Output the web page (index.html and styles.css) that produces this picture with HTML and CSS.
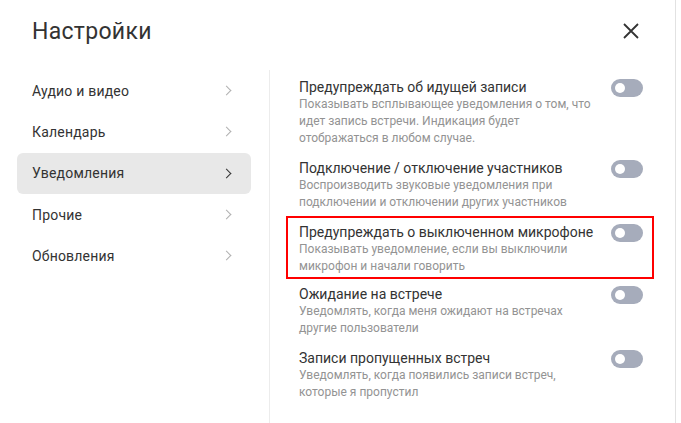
FILE: index.html
```html
<!DOCTYPE html>
<html lang="ru">
<head>
    <meta charset="UTF-8">
    <meta name="viewport" content="width=device-width, initial-scale=1.0">
    <title>Настройки</title>
    <link rel="stylesheet" href="styles.css">
</head>
<body>
    <div class="dialog">
        <div class="header">
            <h1>Настройки</h1>
            <button class="close" aria-label="Закрыть">
                <svg width="16" height="16" viewBox="0 0 16 16">
                    <path d="M1 1 L15 15 M15 1 L1 15" stroke="#333" stroke-width="1.8" fill="none"/>
                </svg>
            </button>
        </div>

        <div class="body">
            <ul class="nav">
                <li>Аудио и видео <span class="chevron"></span></li>
                <li>Календарь <span class="chevron"></span></li>
                <li class="active">Уведомления <span class="chevron"></span></li>
                <li>Прочие <span class="chevron"></span></li>
                <li>Обновления <span class="chevron"></span></li>
            </ul>

            <div class="options">
                <div class="option">
                    <div class="option-text">
                        <div class="option-title">Предупреждать об идущей записи</div>
                        <div class="option-desc">Показывать всплывающее уведомления о том, что идет запись встречи. Индикация будет отображаться в любом случае.</div>
                    </div>
                    <span class="toggle"></span>
                </div>
                <div class="option">
                    <div class="option-text">
                        <div class="option-title">Подключение / отключение участников</div>
                        <div class="option-desc">Воспроизводить звуковые уведомления при подключении и отключении других участников</div>
                    </div>
                    <span class="toggle"></span>
                </div>
                <div class="option marked">
                    <div class="option-text">
                        <div class="option-title">Предупреждать о выключенном микрофоне</div>
                        <div class="option-desc">Показывать уведомление, если вы выключили микрофон и начали говорить</div>
                    </div>
                    <span class="toggle"></span>
                </div>
                <div class="option">
                    <div class="option-text">
                        <div class="option-title">Ожидание на встрече</div>
                        <div class="option-desc">Уведомлять, когда меня ожидают на встречах другие пользователи</div>
                    </div>
                    <span class="toggle"></span>
                </div>
                <div class="option">
                    <div class="option-text">
                        <div class="option-title">Записи пропущенных встреч</div>
                        <div class="option-desc">Уведомлять, когда появились записи встреч, которые я пропустил</div>
                    </div>
                    <span class="toggle"></span>
                </div>
            </div>
        </div>
    </div>
</body>
</html>
```

FILE: styles.css
```css
* {
    margin: 0;
    padding: 0;
    box-sizing: border-box;
}

body {
    font-family: Roboto, 'Noto Sans', sans-serif;
    background: #fff;
    color: #333;
    overflow: hidden;
}

.dialog {
    width: 676px;
    height: 423px;
    border-right: 1px solid #e2e2e2;
    background: #fff;
}

.header {
    display: flex;
    align-items: center;
    justify-content: space-between;
    height: 62px;
    padding: 0 36px 0 32px;
}

.header h1 {
    font-size: 23px;
    font-weight: 400;
    color: #333;
    letter-spacing: 0.3px;
}

.close {
    background: none;
    border: none;
    width: 16px;
    height: 16px;
    display: flex;
    cursor: pointer;
}

.body {
    display: flex;
    padding-top: 8px;
}

.nav {
    list-style: none;
    width: 270px;
    padding: 0 18px 0 17px;
    border-right: 1px solid #ececec;
    height: 353px;
}

.nav li {
    display: flex;
    align-items: center;
    justify-content: space-between;
    height: 41.3px;
    padding: 0 21px 0 15px;
    font-size: 14px;
    letter-spacing: 0.2px;
    color: #333;
    border-radius: 6px;
}

.nav li.active {
    background: #e8e8e8;
}

.chevron {
    width: 7px;
    height: 7px;
    border-top: 1.2px solid #b0b0b0;
    border-right: 1.2px solid #b0b0b0;
    transform: rotate(45deg);
}

.nav li.active .chevron {
    border-color: #333;
    border-width: 1.6px;
}

.options {
    flex: 1;
    padding: 9px 32px 0 29px;
}

.option {
    position: relative;
    display: flex;
    justify-content: space-between;
    align-items: flex-start;
    margin-bottom: 13px;
}

.option.marked {
    margin-bottom: 11px;
}

.option.marked::after {
    content: '';
    position: absolute;
    top: -8px;
    left: -13px;
    right: -11px;
    bottom: -4px;
    border: 2px solid #f00;
    pointer-events: none;
}

.option-text {
    width: 302px;
}

.option-title {
    font-size: 14px;
    line-height: 17px;
    color: #333;
}

.option-desc {
    font-size: 12px;
    line-height: 17px;
    color: #939393;
}

.toggle {
    position: relative;
    width: 32px;
    height: 18px;
    border-radius: 9px;
    background: #a6acbb;
}

.toggle::before {
    content: '';
    position: absolute;
    left: 4px;
    top: 4px;
    width: 10px;
    height: 10px;
    border-radius: 50%;
    background: #fff;
}
```
